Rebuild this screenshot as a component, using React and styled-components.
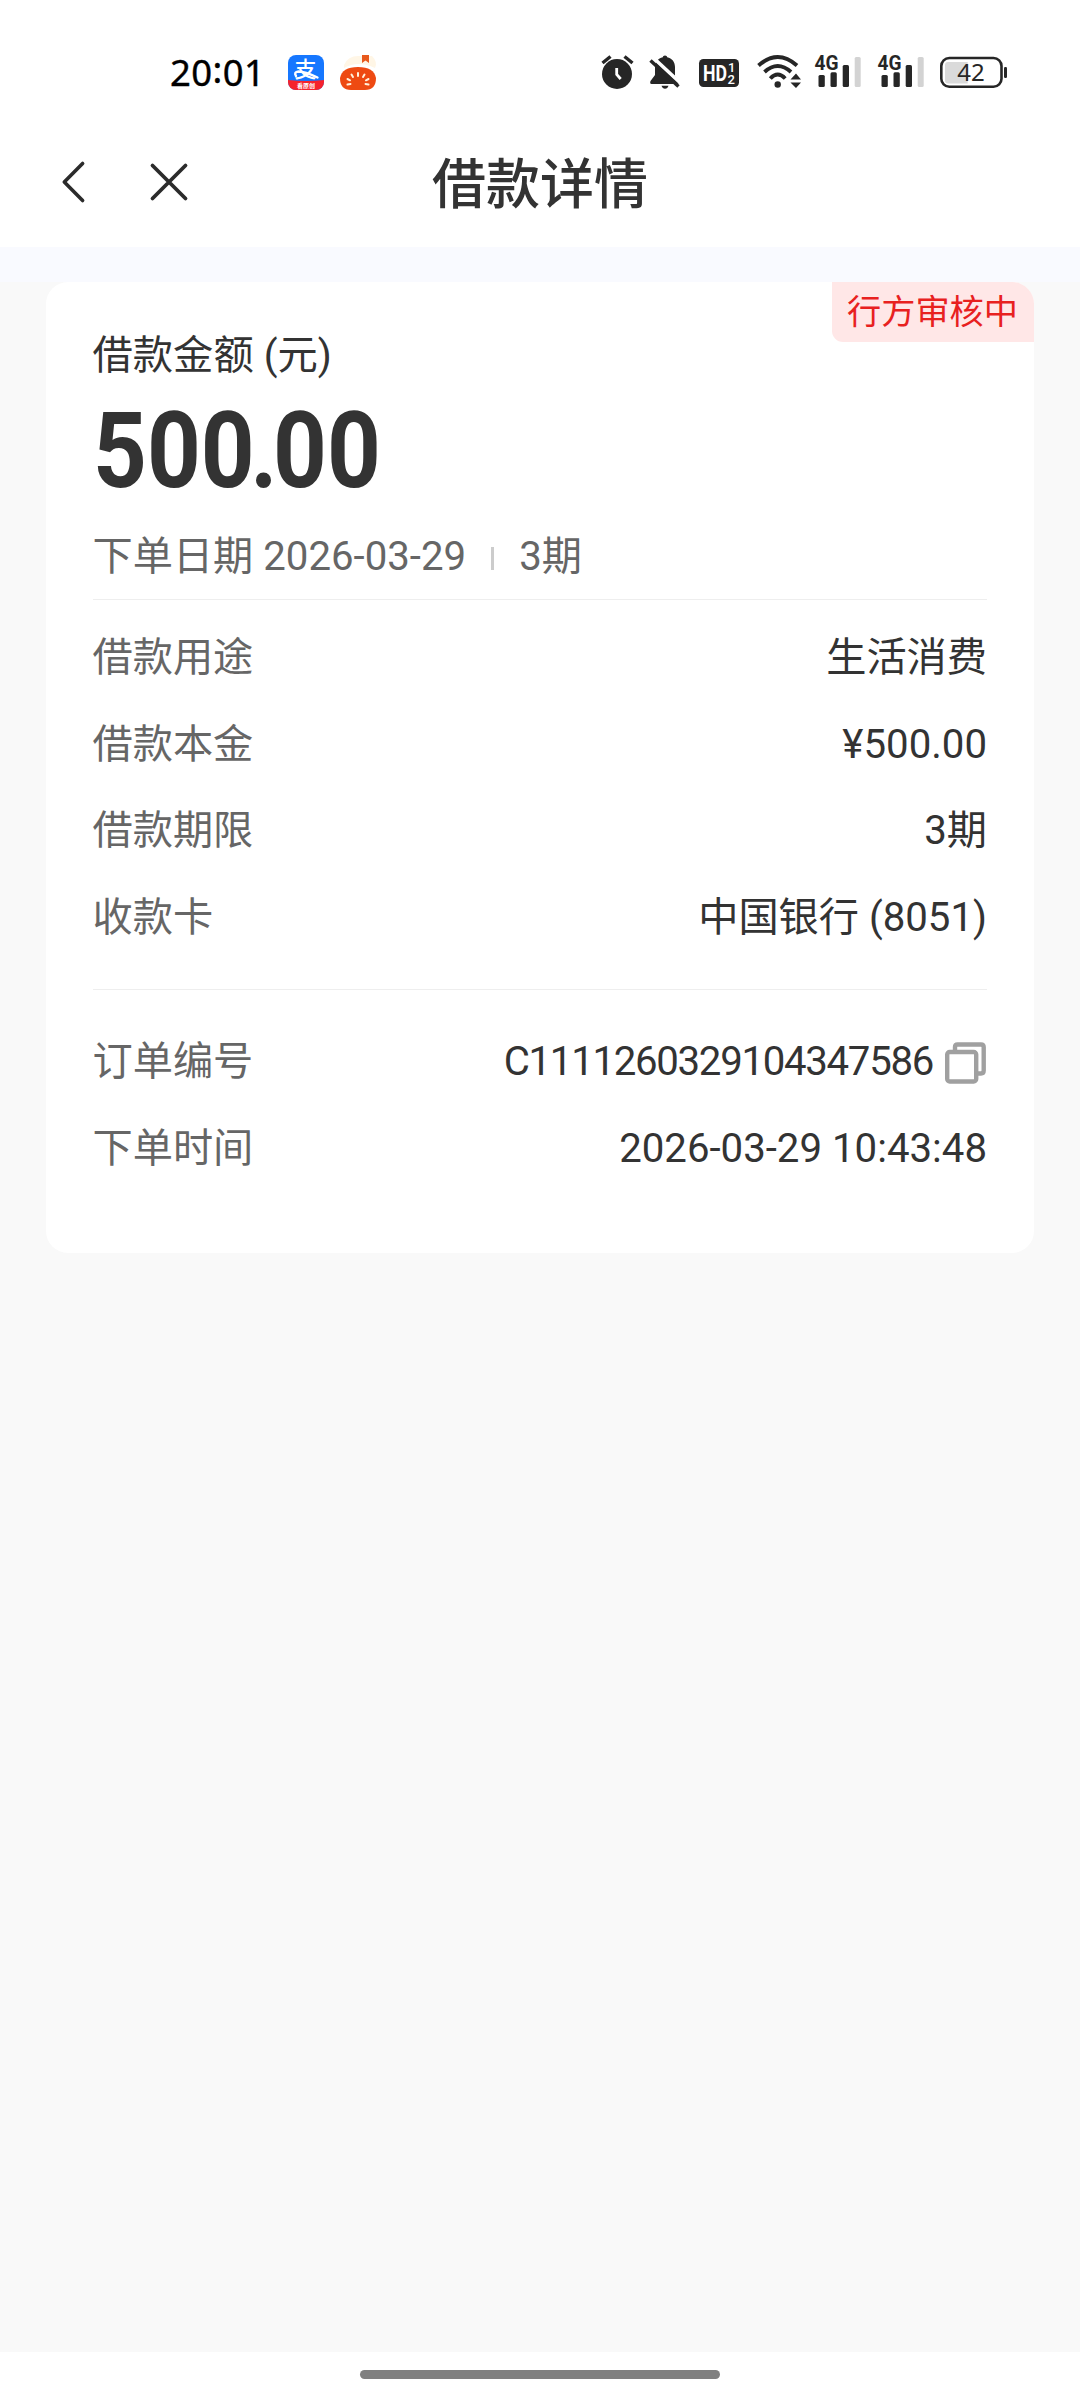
import React from 'react';
import styled, { createGlobalStyle } from 'styled-components';

const GlobalStyle = createGlobalStyle`
  * {
    box-sizing: border-box;
  }

  body {
    margin: 0;
    background: #f9f9f9;
    font-family: Roboto, "Noto Sans CJK SC", sans-serif;
  }

  svg {
    display: block;
    flex: none;
    overflow: visible;
  }
`;

const Page = styled.div`
  width: 1080px;
  height: 2400px;
  display: flex;
  flex-direction: column;
  background: #f9f9f9;
  overflow: hidden;
`;

const StatusBar = styled.div`
  height: 144px;
  display: flex;
  align-items: center;
  padding: 0 73px 0 170px;
  background: #fff;
`;

const Clock = styled.div`
  width: 118px;
  font-family: "Noto Sans", sans-serif;
  font-size: 36.5px;
  font-weight: 400;
  line-height: 38px;
  letter-spacing: 0.4px;
  color: #000;
  -webkit-text-stroke: 0.4px #000;
`;

const Colon = styled.span`
  position: relative;
  top: -3px;
`;

const AppIcons = styled.div`
  display: flex;
  gap: 16px;
`;

const SystemIcons = styled.div`
  display: flex;
  margin-left: auto;
`;

const IconBox = styled.div`
  margin-left: ${props => props.$gap}px;
`;

const NavBar = styled.div`
  height: 103px;
  display: grid;
  grid-template-columns: 1fr auto 1fr;
  align-items: center;
  padding-bottom: 27px;
  background: #fff;
`;

const NavButtons = styled.div`
  display: flex;
  gap: 62px;
  padding-left: 60px;
`;

const Title = styled.h1`
  margin: 0;
  padding-top: 8px;
  font-size: 54px;
  font-weight: 500;
  line-height: 68px;
  color: #333;
`;

const Band = styled.div`
  height: 35px;
  background: #f9faff;
`;

const Content = styled.div`
  flex: 1;
  padding: 0 46px;
`;

const Card = styled.div`
  position: relative;
  height: 971px;
  padding: 44px 47px 0 46.5px;
  border-radius: 22px;
  background: #fff;
  overflow: hidden;
`;

const Badge = styled.div`
  position: absolute;
  top: 0;
  right: 0;
  height: 60px;
  padding: 0 16px 0 15px;
  border-bottom-left-radius: 11px;
  background: #ffe7e7;
  font-size: 34.2px;
  line-height: 60px;
  color: #e8211f;
`;

const AmountLabel = styled.div`
  font-size: 40.3px;
  line-height: 60px;
  color: #333;
`;

const Amount = styled.div`
  height: 120px;
  font-size: 105px;
  font-weight: 700;
  line-height: 132px;
  color: #333;
  transform: scaleX(0.895);
  transform-origin: left;
`;

const Point = styled.span`
  margin: 0 -5px;
`;

const Summary = styled.div`
  height: 94px;
  display: flex;
  align-items: center;
  padding-top: 8px;
  border-bottom: 1px solid #eee;
  font-size: 40.2px;
  line-height: 60px;
  color: #666;
`;

const Separator = styled.span`
  width: 3px;
  height: 23px;
  margin: 4px 25px 0;
  background: #ccc;
`;

const Group = styled.div`
  padding: ${props => props.$pad};
  border-bottom: ${props => (props.$last ? 'none' : '1px solid #eee')};
`;

const Row = styled.div`
  height: 86.5px;
  display: flex;
  align-items: center;
  justify-content: space-between;
  font-size: 40.2px;
  line-height: 60px;
`;

const Label = styled.span`
  color: #666;
`;

const Value = styled.span`
  display: flex;
  align-items: center;
  gap: 12px;
  color: #333;
`;

const OrderNumber = styled.span`
  letter-spacing: -1.3px;
`;

const CopyButton = styled.span`
  padding: 2px 1px 0 0;
`;

const GestureBar = styled.div`
  height: 48px;
  display: flex;
  justify-content: center;
  padding-top: 18px;
  background: #fff;
`;

const Handle = styled.div`
  width: 360px;
  height: 9px;
  border-radius: 5px;
  background: #808080;
`;

const loanRows = [
  { label: '借款用途', value: '生活消费' },
  { label: '借款本金', value: '¥500.00' },
  { label: '借款期限', value: '3期' },
  { label: '收款卡', value: '中国银行 (8051)' },
];

const PayIcon = () => (
  <svg width="36" height="36" viewBox="0 0 36 36">
    <defs>
      <clipPath id="pay">
        <rect x="0" y="1" width="36" height="35" rx="8" />
      </clipPath>
    </defs>
    <g clipPath="url(#pay)">
      <rect width="36" height="36" fill="#1677ff" />
      <path d="M0 26Q18 28 36 26V36H0Z" fill="#f5222d" />
    </g>
    <text x="17.500" y="22.500" textAnchor="middle" fontFamily="Noto Sans CJK SC" fontSize="22" fontWeight="500" fill="#fff">支</text>
    <path d="M8 22Q5.500 18 10.500 17.500Q17 17.500 29.500 23.500" fill="none" stroke="#fff" strokeWidth="2.400" strokeLinecap="round" />
    <text x="18" y="33.500" textAnchor="middle" fontFamily="Noto Sans CJK SC" fontSize="6" fontWeight="700" fill="#fff">看原创</text>
  </svg>
);

const TomatoIcon = () => (
  <svg width="36" height="36" viewBox="0 0 36 36">
    <path d="M4 11Q8 2 18 2L32 2Q38 8 35 14Q18 6 4 14Z" fill="#fff6e6" />
    <path d="M22 1h7v8l-3.500-2.500L22 9z" fill="#e8591c" />
    <path d="M0 24Q2 13 18 13Q34 13 36 24Q36 36 25 36H11Q0 36 0 24Z" fill="#ee4a12" />
    <g stroke="#fff1dc" strokeWidth="2" strokeLinecap="round">
      <path d="M18 19v3M11.500 20.500l1.500 2.500M24.500 20.500L23 23M7.500 25l2.500 1.300M28.500 25l-2.500 1.300M7.500 30.500l3-.5M28.500 30.500l-3-.5" />
    </g>
  </svg>
);

const AlarmIcon = () => (
  <svg width="30" height="36" viewBox="0 0 30 36">
    <circle cx="15" cy="20" r="15" fill="#262626" />
    <path d="M.5 9L8.500 2.500M22.500 2.500L30.500 9" stroke="#262626" strokeWidth="3.400" />
    <path d="M14.700 14v6.500l4 4.500" stroke="#fff" strokeWidth="2.800" fill="none" />
  </svg>
);

const BellOffIcon = () => (
  <svg width="30" height="36" viewBox="0 0 30 36">
    <path d="M15 1.500c1.300 0 2 .8 2.200 1.800C22 4.300 25 8 25 13v9l3.500 4.500Q30 30 27 30H1.500Q-.5 30 .5 27L5 21V13C5 8 8 4.300 12.800 3.300c.2-1 .9-1.800 2.200-1.800Z" fill="#262626" />
    <path d="M11.500 31.800h7q-1 3-3.500 3t-3.500-3z" fill="#262626" />
    <path d="M2.500 3L31 29.500" stroke="#fff" strokeWidth="3.600" />
    <path d="M.5 6.500L28.500 32.500" stroke="#262626" strokeWidth="3.400" />
  </svg>
);

const HdIcon = () => (
  <svg width="40" height="36" viewBox="0 0 40 36">
    <rect y="5" width="40" height="28" rx="4.500" fill="#262626" />
    <g fill="#fff" fontFamily="Roboto" fontWeight="700">
      <text x="4" y="27" fontSize="22" textLength="24" lengthAdjust="spacingAndGlyphs">HD</text>
      <text x="29" y="18" fontSize="13" fontWeight="500">1</text>
      <text x="28.500" y="30" fontSize="13" fontWeight="500">2</text>
    </g>
  </svg>
);

const WifiIcon = () => (
  <svg width="44" height="36" viewBox="0 0 44 36">
    <g fill="none" stroke="#262626" strokeWidth="3.900">
      <path d="M1.500 11.500Q20.700-5.500 40 11.500" />
      <path d="M7.500 18Q20.700 6 34 18" />
      <path d="M13.300 24.500Q20.700 16.500 28.200 24.500" />
    </g>
    <circle cx="20.700" cy="30.500" r="3.200" fill="#262626" />
    <path d="M33.500 25.500L39 19.500L44 25.500ZM33.500 28.500L39 34L44 28.500Z" fill="#262626" />
  </svg>
);

const SignalIcon = () => (
  <svg width="46" height="36" viewBox="0 0 46 36">
    <text x="-.5" y="16" fontFamily="Roboto" fontSize="20.500" fontWeight="700" fill="#262626" textLength="24" lengthAdjust="spacingAndGlyphs">4G</text>
    <g fill="#262626">
      <rect x="3.500" y="21" width="6.300" height="12" rx="1.500" />
      <rect x="15.500" y="18.300" width="6.300" height="14.700" rx="1.500" />
      <rect x="27.700" y="11" width="6.300" height="22" rx="1.500" />
    </g>
    <rect x="39.700" y="3" width="6" height="30" rx="1.500" fill="#d3d3d3" />
  </svg>
);

const BatteryIcon = () => (
  <svg width="67" height="36" viewBox="0 0 67 36">
    <path d="M8 8H27.700V29.500H8Q5 29.500 5 26.500V11Q5 8 8 8Z" fill="#dadada" />
    <rect x="1.300" y="4" width="60.200" height="28.700" rx="8" fill="none" stroke="#262626" strokeWidth="2.600" />
    <rect x="64" y="13" width="3" height="11" rx="1.200" fill="#262626" />
    <text x="31" y="27" textAnchor="middle" fontFamily="Noto Sans" fontSize="24" fill="#262626">42</text>
  </svg>
);

const BackIcon = () => (
  <svg width="28" height="44" viewBox="0 0 28 44" fill="none" stroke="#2b2b2b" strokeWidth="3.600" strokeLinecap="round" strokeLinejoin="round">
    <path d="M22.600 3.500L4.300 22L22.600 40.500" />
  </svg>
);

const CloseIcon = () => (
  <svg width="38" height="44" viewBox="0 0 38 44" fill="none" stroke="#2b2b2b" strokeWidth="3.800" strokeLinecap="round">
    <path d="M2.500 5.500L35.500 38.500M35.500 5.500L2.500 38.500" />
  </svg>
);

const CopyIcon = () => (
  <svg width="41" height="42" viewBox="0 0 41 42" fill="none" stroke="#a0a0a0" strokeWidth="4.400">
    <rect x="2.200" y="10" width="29" height="29.500" rx="2.500" />
    <path d="M10 10V5Q10 2.500 12.500 2.500H36Q38.700 2.500 38.700 5V28.500Q38.700 31.500 36 31.500H32" />
  </svg>
);

const InfoRow = ({ label, children }) => (
  <Row>
    <Label>{label}</Label>
    <Value>{children}</Value>
  </Row>
);

const App = () => {
  return (
    <Page>
      <GlobalStyle />
      <StatusBar>
        <Clock>20<Colon>:</Colon>01</Clock>
        <AppIcons>
          <PayIcon />
          <TomatoIcon />
        </AppIcons>
        <SystemIcons>
          <IconBox $gap={0}><AlarmIcon /></IconBox>
          <IconBox $gap={18}><BellOffIcon /></IconBox>
          <IconBox $gap={19}><HdIcon /></IconBox>
          <IconBox $gap={18}><WifiIcon /></IconBox>
          <IconBox $gap={14}><SignalIcon /></IconBox>
          <IconBox $gap={17}><SignalIcon /></IconBox>
          <IconBox $gap={16}><BatteryIcon /></IconBox>
        </SystemIcons>
      </StatusBar>
      <NavBar>
        <NavButtons>
          <BackIcon />
          <CloseIcon />
        </NavButtons>
        <Title>借款详情</Title>
      </NavBar>
      <Band />
      <Content>
        <Card>
          <Badge>行方审核中</Badge>
          <AmountLabel>借款金额 (元)</AmountLabel>
          <Amount>500<Point>.</Point>00</Amount>
          <Summary>
            <span>下单日期 2026-03-29</span>
            <Separator />
            <span>3期</span>
          </Summary>
          <Group $pad="15px 0 28px">
            {loanRows.map(row => (
              <InfoRow key={row.label} label={row.label}>{row.value}</InfoRow>
            ))}
          </Group>
          <Group $pad="29px 0 0" $last>
            <InfoRow label="订单编号">
              <OrderNumber>C1111260329104347586</OrderNumber>
              <CopyButton><CopyIcon /></CopyButton>
            </InfoRow>
            <InfoRow label="下单时间">2026-03-29 10:43:48</InfoRow>
          </Group>
        </Card>
      </Content>
      <GestureBar>
        <Handle />
      </GestureBar>
    </Page>
  );
};

export default App;
